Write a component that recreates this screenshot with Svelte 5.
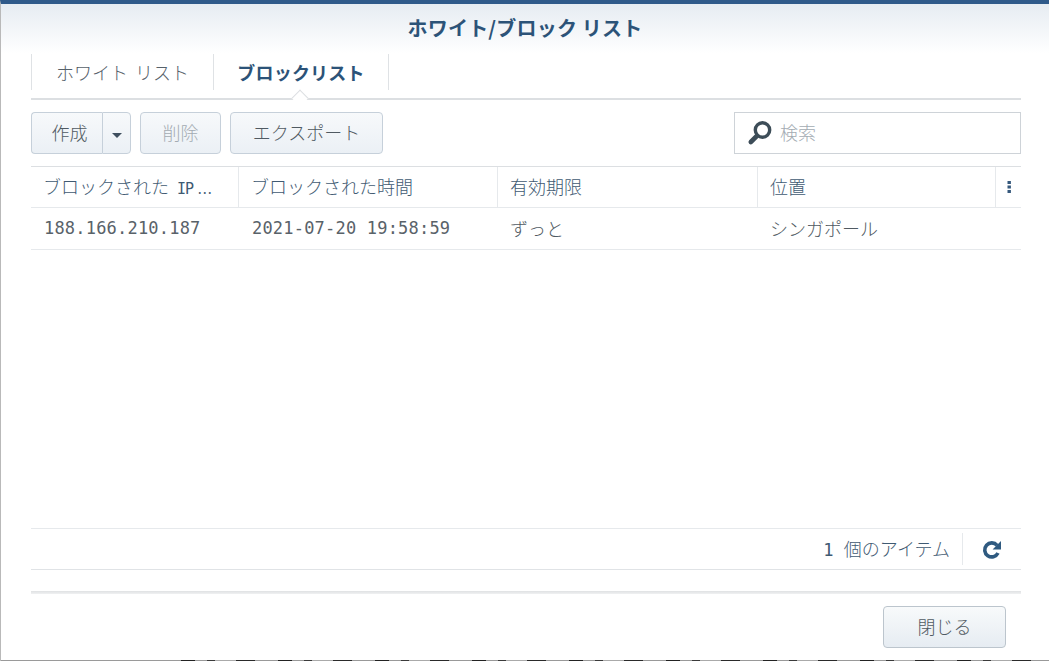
<script>
    const columns = [
        { label: "ブロックされた", latin: "\u00a0IP", value: "188.166.210.187", mono: true, width: 208 },
        { label: "ブロックされた時間", value: "2021-07-20 19:58:59", mono: true, width: 259 },
        { label: "有効期限", value: "ずっと", width: 260 },
        { label: "位置", value: "シンガポール", width: 238 }
    ];
</script>

<div class="dialog">
    <header class="title">ホワイト/ブロック リスト</header>

    <div class="body">
        <nav class="tabs">
            <button class="tab">ホワイト リスト</button>
            <button class="tab active">ブロックリスト</button>
        </nav>

        <div class="toolbar">
            <div class="split">
                <button class="btn main">作成</button>
                <button class="btn caret" aria-label="メニュー">
                    <svg width="10" height="5" viewBox="0 0 10 5"><path d="M0 0h10L5 5z" fill="#3f4f5f" /></svg>
                </button>
            </div>
            <button class="btn delete" disabled>削除</button>
            <button class="btn export">エクスポート</button>
            <label class="search">
                <svg width="26" height="26" viewBox="0 0 26 26">
                    <circle cx="15.5" cy="10" r="7.2" fill="none" stroke="#3d4d58" stroke-width="3.4" />
                    <path d="M9.8 16 3.8 22" stroke="#3d4d58" stroke-width="4.6" stroke-linecap="round" />
                </svg>
                <input placeholder="検索" />
            </label>
        </div>

        <div class="grid">
            <div class="row head">
                {#each columns as col}
                    <div class="cell" style="width: {col.width}px">{col.label}{#if col.latin}<span class="latin">{col.latin}</span><span class="dots">&nbsp;...</span>{/if}</div>
                {/each}
                <div class="cell more">
                    <svg width="4" height="12" viewBox="0 0 4 12" fill="#35587c">
                        <rect x="0.5" width="3.4" height="3" /><rect x="0.5" y="4.5" width="3.4" height="3" /><rect x="0.5" y="9" width="3.4" height="3" />
                    </svg>
                </div>
            </div>
            <div class="row item">
                {#each columns as col}
                    <div class="cell" class:mono={col.mono} style="width: {col.width}px">{col.value}</div>
                {/each}
            </div>
        </div>

        <div class="pager">
            <span class="count"><span class="mono">1&nbsp;</span>個のアイテム</span>
            <button class="refresh" aria-label="更新">
                <svg width="20" height="20" viewBox="0 0 20 20">
                    <path d="M16 13a7 7 0 1 1-.9-7.6" fill="none" stroke="#2f5a80" stroke-width="3.6" />
                    <path d="M19 1v8.4h-8.4z" fill="#2f5a80" />
                </svg>
            </button>
        </div>

        <div class="divider"></div>

        <div class="actions">
            <button class="btn close">閉じる</button>
        </div>
    </div>
</div>

<style>
    :global(body) {
        margin: 0;
        background: #fff;
    }

    .dialog {
        width: 1049px;
        height: 661px;
        box-sizing: border-box;
        border-top: 4px solid #2f5a8a;
        border-left: 1px solid #b9b9b9;
        overflow: hidden;
        background: #fff;
        font-family: "Noto Sans CJK JP", "Liberation Sans", sans-serif;
        font-size: 18px;
        font-weight: 300;
        color: #505a62;
        display: flex;
        flex-direction: column;
        position: relative;
    }

    /* text of the page behind the dialog shows at the bottom edge */
    .dialog::after {
        content: "";
        position: absolute;
        left: 0;
        right: 0;
        bottom: 0;
        height: 1px;
        background:
            repeating-linear-gradient(90deg, #222 0 14px, #999 14px 26px, #3a3a3a 26px 34px, #aaa 34px 55px, #2a2a2a 55px 74px, #999 74px 97px) 180px 0 no-repeat,
            #9a9a9a;
    }

    button, input {
        font-family: inherit;
        font-weight: inherit;
    }

    .mono {
        font-family: "DejaVu Sans Mono", "Noto Sans CJK JP", monospace;
        font-size: 17px;
        font-weight: 400;
    }

    .latin {
        font-family: "DejaVu Sans Mono", monospace;
        font-size: 15px;
        font-weight: 400;
        letter-spacing: -1px;
    }

    .dots {
        letter-spacing: 0.5px;
    }

    .title {
        height: 49px;
        flex: none;
        background: linear-gradient(#e6ecf2, #fff);
        color: #2c5378;
        font-size: 20px;
        font-weight: 700;
        letter-spacing: 0.2px;
        line-height: 48px;
        text-align: center;
    }

    .body {
        flex: 1;
        padding: 0 28px 0 30px;
        display: flex;
        flex-direction: column;
    }

    .tabs {
        height: 47px;
        flex: none;
        display: flex;
        border-bottom: 2px solid #dcdfe2;
        box-sizing: border-box;
        position: relative;
    }

    .tab {
        background: none;
        border: 0;
        border-left: 1px solid #dfe2e5;
        height: 36px;
        margin-top: 1px;
        padding: 0;
        font-size: 18px;
        color: #56616a;
    }

    .tab:first-child {
        width: 182px;
        word-spacing: 3px;
    }

    .tab.active {
        width: 176px;
        border-right: 1px solid #dfe2e5;
        color: #2c5378;
        font-weight: 700;
        letter-spacing: 0.2px;
    }

    .tabs::after {
        content: "";
        position: absolute;
        left: 263px;
        top: 39px;
        width: 11px;
        height: 11px;
        background: #fff;
        border-left: 1px solid #dcdfe2;
        border-top: 1px solid #dcdfe2;
        transform: rotate(45deg);
    }

    .toolbar {
        display: flex;
        align-items: center;
        margin-top: 12px;
        height: 42px;
        flex: none;
    }

    .btn {
        height: 42px;
        box-sizing: border-box;
        border: 1px solid #c6d0da;
        border-radius: 4px;
        background: linear-gradient(#f7f9fb, #ebf0f5);
        color: #505a62;
        font-size: 18px;
        line-height: 38px;
        padding: 0 0 2px;
    }

    .split { display: flex; }

    .main {
        width: 71px;
        border-right: 0;
        border-radius: 4px 0 0 4px;
        padding-left: 5px;
    }

    .caret {
        width: 29px;
        border-radius: 0 4px 4px 0;
        display: flex;
        align-items: center;
        justify-content: center;
        padding: 5px 0 0;
    }

    .delete {
        width: 81px;
        margin-left: 9px;
        color: #a3abb2;
    }

    .export {
        width: 153px;
        margin-left: 9px;
    }

    .search {
        margin-left: auto;
        width: 287px;
        height: 42px;
        box-sizing: border-box;
        border: 1px solid #ced3d8;
        display: flex;
        align-items: center;
        padding-left: 12px;
        gap: 6px;
    }

    .search input {
        border: 0;
        outline: 0;
        flex: 1;
        min-width: 0;
        font-size: 18px;
        background: none;
        padding: 0 0 2px 1px;
    }

    .search input::placeholder {
        color: #a3abb2;
        opacity: 1;
    }

    .grid {
        margin-top: 12px;
        flex: 1;
        border-top: 1px solid #dcdfe2;
    }

    .row {
        display: flex;
        height: 42px;
        box-sizing: border-box;
        border-bottom: 1px solid #e6e9ec;
    }

    .row.head {
        height: 41px;
    }

    .cell {
        box-sizing: border-box;
        padding-left: 12px;
        line-height: 40px;
        white-space: nowrap;
        overflow: hidden;
    }

    .head .cell {
        color: #3f5a72;
        border-right: 1px solid #e6e9ec;
        line-height: 39px;
    }

    .item .cell.mono {
        padding-left: 13px;
        color: #596269;
        letter-spacing: 0.2px;
    }

    .more {
        flex: 1;
        padding: 0;
        border-right: 0 !important;
        display: flex;
        align-items: center;
        justify-content: center;
    }

    .pager {
        height: 42px;
        flex: none;
        box-sizing: border-box;
        border-top: 1px solid #e6e9ec;
        border-bottom: 1px solid #e0e3e6;
        display: flex;
        align-items: center;
        justify-content: flex-end;
    }

    .count {
        color: #3f5a72;
        padding-right: 12px;
        line-height: 30px;
        border-right: 1px solid #e6e9ec;
    }

    .refresh {
        width: 58px;
        background: none;
        border: 0;
        padding: 5px 0 0 0;
    }

    .divider {
        height: 3px;
        margin-top: 21px;
        background: linear-gradient(#dfe1e3, #f0f1f2);
        flex: none;
    }

    .actions {
        display: flex;
        justify-content: flex-end;
        padding: 12px 15px 13px 0;
    }

    .close {
        width: 123px;
        border-color: #bcc5cd;
        background: linear-gradient(#f8fafb, #e6ecf2);
    }
</style>
